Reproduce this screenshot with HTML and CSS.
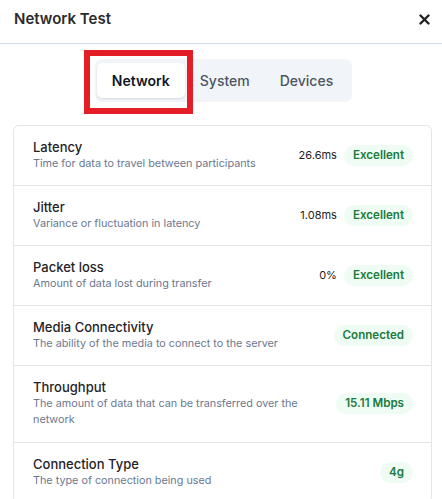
FILE: index.html
```html
<!DOCTYPE html>
<html>
<head>
<meta charset="utf-8">
<link rel="stylesheet" href="styles.css">
</head>
<body>
<div class="modal">
  <header class="header">
    <h1 class="title">Network Test</h1>
    <button class="close" aria-label="Close">
      <svg width="11" height="11" viewBox="0 0 11 11"><path d="M1.5 1.5 L9.5 9.5 M9.5 1.5 L1.5 9.5" stroke="#222" stroke-width="2.4" stroke-linecap="round"/></svg>
    </button>
  </header>
  <div class="tabs-wrap">
    <div class="tabs">
      <div class="tab active">Network<span class="highlight"></span></div>
      <div class="tab">System</div>
      <div class="tab">Devices</div>
    </div>
  </div>
  <div class="card">
    <div class="row">
      <div class="info"><div class="name">Latency</div><div class="desc">Time for data to travel between participants</div></div>
      <div class="result"><span class="value">26.6ms</span><span class="badge">Excellent</span></div>
    </div>
    <div class="row">
      <div class="info"><div class="name">Jitter</div><div class="desc">Variance or fluctuation in latency</div></div>
      <div class="result"><span class="value">1.08ms</span><span class="badge">Excellent</span></div>
    </div>
    <div class="row">
      <div class="info"><div class="name">Packet loss</div><div class="desc">Amount of data lost during transfer</div></div>
      <div class="result"><span class="value">0%</span><span class="badge">Excellent</span></div>
    </div>
    <div class="row">
      <div class="info"><div class="name">Media Connectivity</div><div class="desc">The ability of the media to connect to the server</div></div>
      <div class="result"><span class="badge">Connected</span></div>
    </div>
    <div class="row tall">
      <div class="info"><div class="name">Throughput</div><div class="desc">The amount of data that can be transferred over the network</div></div>
      <div class="result"><span class="badge">15.11 Mbps</span></div>
    </div>
    <div class="row">
      <div class="info"><div class="name">Connection Type</div><div class="desc">The type of connection being used</div></div>
      <div class="result"><span class="badge">4g</span></div>
    </div>
  </div>
</div>
</body>
</html>
```
FILE: styles.css
```css
* { box-sizing: border-box; }
html, body { margin: 0; padding: 0; background: #fff; }
body { font-family: Inter, "Noto Sans", sans-serif; color: #1f2937; overflow: hidden; }
.modal { width: 442px; height: 499px; }
.header {
  height: 44px;
  display: flex;
  align-items: center;
  justify-content: space-between;
  padding: 0 10px 0 14px;
  border-bottom: 1px solid #cfdbe6;
}
.title { margin: 0; font-size: 15px; font-weight: 600; color: #2b2b2b; padding-bottom: 6px; }
.close { border: 0; background: none; padding: 0; width: 16px; height: 16px; display: flex; align-items: center; justify-content: center; margin-bottom: 4px; }
.tabs-wrap { display: flex; justify-content: center; padding: 15px 0 23px 5px; }
.tabs {
  display: flex;
  background: #f1f5f9;
  border-radius: 7px;
  padding: 4px 4px 4px 2px;
}
.tab {
  position: relative;
  height: 35px;
  padding: 0 15px;
  display: flex;
  align-items: center;
  font-size: 14px;
  font-weight: 500;
  color: #4b5563;
}
.tab.active {
  background: #fff;
  color: #111827;
  font-weight: 600;
  border-radius: 5px;
  box-shadow: 0 1px 2px rgba(15, 23, 42, 0.12);
  width: 88px;
  justify-content: center;
}
.highlight {
  position: absolute;
  left: -13px;
  top: -13px;
  width: 109px;
  height: 64px;
  border: 6px solid #e41e26;
  pointer-events: none;
}
.card {
  margin: 0 10px 0 13px;
  border: 1px solid #e2e4e8;
  border-radius: 6px;
}
.row {
  display: flex;
  align-items: center;
  gap: 16px;
  padding: 12px 18px 13px 19px;
  border-bottom: 1px solid #e2e4e8;
}
.row.tall { padding-bottom: 14px; }
.row:last-child { border-bottom: 0; }
.info { flex: 1; min-width: 0; }
.name { font-size: 13px; font-weight: 500; line-height: 18px; color: #1f2328; }
.desc { font-size: 10.8px; line-height: 16px; color: #6b7891; }
.result { display: flex; align-items: center; gap: 7px; flex-shrink: 0; }
.value { font-size: 11px; color: #222; }
.badge {
  height: 21px;
  padding: 0 9px;
  border-radius: 11px;
  background: #effcf3;
  color: #1b7a3d;
  font-size: 11.6px;
  font-weight: 600;
  display: flex;
  align-items: center;
}
```
